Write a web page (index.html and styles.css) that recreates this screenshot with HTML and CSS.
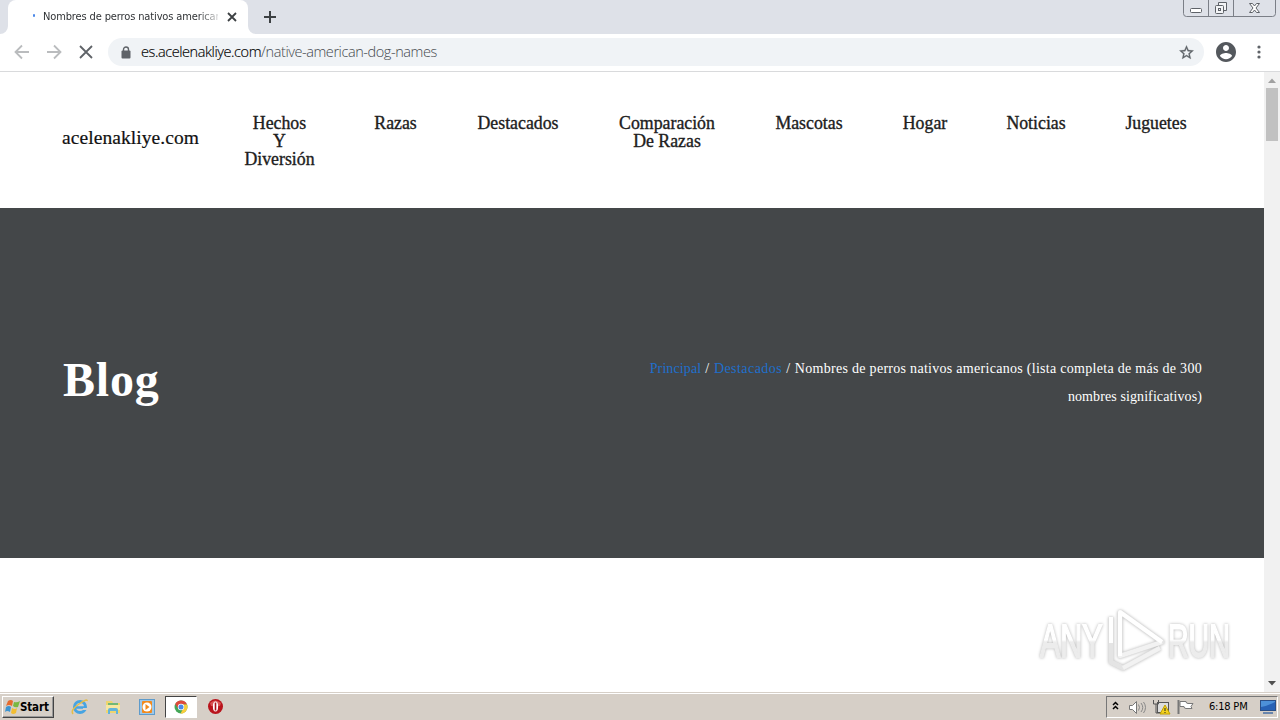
FILE: index.html
```html
<!DOCTYPE html>
<html lang="es">
<head>
<meta charset="utf-8">
<title>Nombres de perros nativos americanos</title>
<link rel="stylesheet" href="styles.css">
</head>
<body>
<div class="screen">
  <div class="tabstrip">
    <div class="tab">
      <span class="loading"></span>
      <span class="tab-title">Nombres de perros nativos american</span>
      <svg class="tab-close" width="10" height="10" viewBox="0 0 10 10"><path d="M1 1l8 8M9 1L1 9" stroke="#3c4043" stroke-width="1.8"/></svg>
      <svg class="tab-curve left" width="8" height="8"><path d="M8 0v8H0A8 8 0 0 0 8 0z" fill="#fff"/></svg>
      <svg class="tab-curve right" width="8" height="8"><path d="M0 0v8h8A8 8 0 0 1 0 0z" fill="#fff"/></svg>
    </div>
    <svg class="newtab" width="12" height="12"><path d="M6 0v12M0 6h12" stroke="#3c4043" stroke-width="2"/></svg>
    <svg class="winbuttons" width="94" height="18" fill="none" stroke="#7b7f87">
      <path d="M.5 0v13.5q0 3 3 3h86q3 0 3-3V0M25.500 0v16M50.500 0v16" />
      <g stroke="#5e6268"><rect x="7.500" y="8.500" width="11" height="4" rx="1" fill="#fff"/>
      <path d="M35.500 5V2.500h8v8H41" fill="#f3f4f6"/><rect x="32.500" y="5.500" width="8" height="8" rx="1" fill="#f3f4f6"/><rect x="35.500" y="8.500" width="2" height="2"/>
      <path d="M66.500 3.500h3l2 2.500 2-2.500h3l-3.500 4.500 3.500 4.500h-3l-2-2.500-2 2.500h-3l3.500-4.500z" fill="#fff"/></g>
    </svg>
  </div>
  <div class="toolbar">
    <svg class="nav-icons" width="108" height="37" fill="none" stroke-width="1.800">
      <path d="M29 18H16M22 11.500L15.500 18l6.500 6.500M47 18h13M54 11.500l6.500 6.500-6.500 6.500" stroke="#babcbe"/>
      <path d="M80 12l12 12M92 12L80 24" stroke="#5f6368"/>
    </svg>
    <div class="omnibox">
      <svg class="lock" width="10" height="13"><path d="M2.500 5V3.500a2.500 2.500 0 0 1 5 0V5" fill="none" stroke="#5f6368" stroke-width="1.400"/><rect x=".5" y="4.500" width="9" height="8" rx="1" fill="#5f6368"/></svg>
      <span class="url"><b>es.acelenakliye.com</b>/native-american-dog-names</span>
      <svg class="star" width="17" height="17" viewBox="0 0 24 24"><path d="M22 9.240l-7.190-.62L12 2 9.190 8.630 2 9.240l5.460 4.730L5.820 21 12 17.270 18.180 21l-1.630-7.030L22 9.240zM12 15.400l-3.760 2.270 1-4.280-3.320-2.880 4.380-.38L12 6.100l1.710 4.040 4.380.38-3.320 2.880 1 4.280L12 15.400z" fill="#5f6368" stroke="#5f6368" stroke-width=".4"/></svg>
    </div>
    <svg class="profile" width="22" height="22" viewBox="1 1 22 22"><path d="M12 2C6.480 2 2 6.480 2 12s4.480 10 10 10 10-4.480 10-10S17.520 2 12 2zm0 3c1.660 0 3 1.340 3 3s-1.340 3-3 3-3-1.340-3-3 1.340-3 3-3zm0 14.200c-2.500 0-4.710-1.280-6-3.220.03-1.990 4-3.080 6-3.080 1.990 0 5.970 1.090 6 3.080-1.290 1.940-3.500 3.220-6 3.220z" fill="#54585d"/></svg>
    <svg class="dots" width="4" height="14" fill="#5f6368"><circle cx="2" cy="2" r="1.600"/><circle cx="2" cy="7" r="1.600"/><circle cx="2" cy="12" r="1.600"/></svg>
  </div>
  <div class="viewport">
    <div class="page">
      <header class="header">
        <div class="brand">acelenakliye.com</div>
        <nav class="menu">
          <a>Hechos<br>Y<br>Diversión</a><a>Razas</a><a>Destacados</a><a>Comparación<br>De Razas</a><a>Mascotas</a><a>Hogar</a><a>Noticias</a><a>Juguetes</a>
        </nav>
      </header>
      <section class="hero">
        <h1>Blog</h1>
        <p class="crumbs"><a>Principal</a> / <a class="cat">Destacados</a> / <span class="l1">Nombres de perros nativos americanos (lista completa de más de 300</span><br><span class="l2">nombres significativos)</span></p>
      </section>
    </div>
    <div class="scrollbar">
      <svg width="16" height="16"><path d="M4 11l4-4.500 4 4.500z" fill="#a0a0a0"/></svg>
      <div class="thumb"></div>
      <svg class="down" width="16" height="17"><path d="M4 6h8l-4 4.500z" fill="#505050"/></svg>
    </div>
    <div class="watermark">
      <span class="wm any">ANY</span>
      <svg width="62" height="68" viewBox="0 0 62 68" fill="none" stroke-linejoin="round">
        <path d="M15 5v44L57 35 15 5M6 10v45l12 6 37-20" stroke="#e4e4e4" stroke-width="5"/>
        <path d="M15 5v44L57 35M18 61l37-20" stroke="#f2f2f2" stroke-width="4"/>
        <path d="M15 49V5l42 30M6 36V10" stroke="#fff" stroke-width="4"/>
      </svg>
      <span class="wm run">RUN</span>
    </div>
  </div>
  <div class="taskbar">
    <div class="start">
      <svg width="16" height="16"><path d="M3 2q3-2 5 0L7 7Q4 5 1 7z" fill="#e66b2e"/><path d="M9 3q3 1 6-1l-2 6q-3 1-5-1z" fill="#79b843"/><path d="M1 8q3-2 5 0l-1 5q-3-2-5 0z" fill="#3c94d1"/><path d="M7 9q3 2 5 0l-1 5q-3 2-5 0z" fill="#f2bd32"/></svg>
      <span>Start</span>
    </div>
    <div class="quick">
      <svg width="18" height="18" fill="none"><circle cx="9" cy="9" r="5.500" stroke="#47a4e2" stroke-width="3"/><path d="M5 9.500h9" stroke="#47a4e2" stroke-width="2.500"/><path d="M12 11h5" stroke="#d6cfc7" stroke-width="2"/><path d="M2 16Q-1 12 8 6t8-3" stroke="#e5bd48" stroke-width="1.500"/></svg>
      <svg width="18" height="18"><path d="M2 3h6l1 2h7v10H2z" fill="#eed56e"/><path d="M4 5h10v4H4z" fill="#71b876"/><path d="M2 7h14v5H2z" fill="#f7e7a0"/><path d="M4 16v-4q0-2 2-2h6q2 0 2 2v4h-2v-3H6v3z" fill="#62b4da"/></svg>
      <svg width="18" height="18"><rect x="1.500" y="1.500" width="15" height="15" fill="#9dc8ea" stroke="#5e9bcb"/><rect x="4" y="3" width="10" height="12" rx="1" fill="#f28a1d"/><circle cx="9" cy="9" r="4.500" fill="#fff"/><path d="M7.500 6v6l4-3z" fill="#f28a1d"/></svg>
      <div class="active"><svg width="14" height="14"><circle cx="7" cy="7" r="6.500" fill="#43a657"/><path d="M1.200 4A6.500 6.500 0 0 1 13 4.500H7L4.500 9z" fill="#df493b"/><path d="M13 4.500A6.500 6.500 0 0 1 6.500 13.500L9.500 8 7 4.500z" fill="#f9cd3c"/><circle cx="7" cy="7" r="3.200" fill="#fff"/><circle cx="7" cy="7" r="2.500" fill="#4b88e8"/></svg></div>
      <svg width="17" height="17"><circle cx="8.500" cy="8.500" r="7.500" fill="#b9141c"/><path d="M3 5q5-5 11 0l-1 3H4z" fill="#d95353"/><ellipse cx="8.500" cy="8.500" rx="2.600" ry="5" fill="#fff"/><path d="M8.500 4.500v8" stroke="#a81018" stroke-width="1.600"/></svg>
    </div>
    <div class="tray">
      <svg width="98" height="20" fill="none">
        <path d="M6 8l2.500-2.500L11 8M6 12l2.500-2.500L11 12" stroke="#000" stroke-width="1.500"/>
        <path d="M22.500 8.500h3l4-4v12l-4-4h-3z" fill="#fff" stroke="#777"/><path d="M31.500 7.500q2 3 0 6M34 6q3.500 4.500 0 9M36.500 5q4 5.500 0 11" stroke="#888"/>
        <rect x="50.500" y="5.500" width="11" height="10" fill="#ddd" stroke="#555"/><path d="M46.500 3v4h5V3M49 7v9h5" stroke="#555"/><path d="M58 8l5 9H53z" fill="#f4d21e" stroke="#c1a000"/><path d="M58 11v3M58 15v1" stroke="#222"/>
        <path d="M71.500 3v14" stroke="#777" stroke-width="2"/><path d="M73 4.500h6q0 2 2 2h5l-2 3 1 2h-6q-2 0-2-2h-4z" fill="#fff" stroke="#777"/>
      </svg>
      <span class="clock">6:18 PM</span>
      <svg class="desk" width="16" height="14"><rect x=".5" y=".5" width="15" height="10" fill="#2762b5" stroke="#2a4f87"/><path d="M1 7q7-1 14-5V1H1z" fill="#4d91d8"/><path d="M3 13h10" stroke="#6a86ad" stroke-width="2"/></svg>
    </div>
  </div>
</div>
</body>
</html>
```

FILE: styles.css
```css
* { box-sizing: border-box; }
body { margin: 0; background: #fff; }
svg { display: block; flex: none; }
.screen { width: 1280px; height: 720px; display: flex; flex-direction: column; overflow: hidden; }
.tabstrip { height: 34px; flex: none; background: #dee1e8; display: flex; padding-left: 8px; position: relative; }
.tab { width: 240px; height: 34px; background: #fff; border-radius: 8px 8px 0 0; position: relative; display: flex; align-items: center; padding-left: 25px; }
.loading { width: 2px; height: 3px; border-radius: 1px; background: #4b88e8; margin: 0 1px 4px 0; }
.tab-title { margin-left: 7px; width: 175px; height: 20px; font: 11px/20px "DejaVu Sans Condensed", "DejaVu Sans", sans-serif; font-stretch: condensed; letter-spacing: -.13px; color: #303336; white-space: nowrap; -webkit-mask-image: linear-gradient(to right, #000 155px, transparent 180px); }
.tab-close { margin-left: 9px; }
.tab-curve { position: absolute; bottom: 0; }
.left { left: -8px; }
.right { right: -8px; }
.newtab { margin: 11px 0 0 16px; }
.winbuttons { margin-left: auto; margin-right: 3px; }
.toolbar { height: 38px; flex: none; display: flex; align-items: center; border-bottom: 1px solid #d9dadc; }
.omnibox { width: 1096px; height: 28px; margin-bottom: 1px; border-radius: 14px; background: #f0f3f6; display: flex; align-items: center; padding: 0 9px 0 13px; }
.url { margin-left: 10px; font: 300 14.5px/20px "Open Sans", "Noto Sans", sans-serif; letter-spacing: -.43px; color: #45494e; }
.url b { font-weight: 300; color: #000; -webkit-text-stroke: .15px #000; letter-spacing: -.42px; }
.star { margin-left: auto; }
.profile { margin: 0 0 2px 11px; }
.dots { margin: 0 0 1px 20px; }
.viewport { height: 620px; flex: none; display: flex; position: relative; }
.page { width: 1264px; font-family: "Liberation Serif", serif; }
.header { height: 136px; display: flex; padding: 42px 0 0 62px; color: #202020; }
.brand { width: 183px; padding-top: 12px; font-size: 19.5px; line-height: 23px; color: #111; letter-spacing: .07px; -webkit-text-stroke: .2px #111; }
.menu { display: grid; grid-template-columns: 69px 43px 82px 96px 68px 44px 58px 62px; justify-items: center; column-gap: 60px; font-size: 17.8px; line-height: 18px; text-align: center; white-space: nowrap; -webkit-text-stroke: .35px #202020; }
.hero { height: 350px; background: #444749; color: #fff; display: flex; justify-content: space-between; padding: 0 62px 0 63px; }
.hero h1 { margin: 144px 0 0; font-size: 48px; line-height: 56px; letter-spacing: .8px; }
.crumbs { margin: 147px 0 0; text-align: right; font-size: 14px; line-height: 28px; white-space: nowrap; letter-spacing: .6px; }
.crumbs a { color: #1f6fcb; letter-spacing: .1px; }
.crumbs .cat { letter-spacing: .45px; }
.l1 { letter-spacing: .29px; }
.l2 { letter-spacing: .1px; }
.scrollbar { width: 16px; background: #f1f1f1; display: flex; flex-direction: column; align-items: center; }
.thumb { width: 12px; height: 53px; background: #c1c1c1; }
.down { margin-top: auto; }
.watermark { position: absolute; left: 1040px; top: 535px; width: 196px; height: 68px; display: flex; align-items: center; filter: drop-shadow(0 0 1.5px #b5b5b5); }
.wm { font: 46px/56px "Liberation Sans", sans-serif; color: transparent; background: linear-gradient(#fff 48%, #ececec 52%); -webkit-background-clip: text; background-clip: text; transform-origin: left; width: 106px; margin-right: -41px; flex: none; -webkit-text-stroke: 2px transparent; }
.any { transform: scaleX(.66); }
.run { transform: scaleX(.62); margin-left: 1px; }
.taskbar { height: 28px; flex: none; background: #d6cfc7; border-top: 1px solid #d6cfc7; box-shadow: inset 0 1px #fff; display: flex; align-items: center; padding-left: 2px; }
.start { width: 52px; height: 22px; display: flex; align-items: center; padding-left: 2px; border: 1px solid; border-color: #fff #444 #444 #fff; box-shadow: inset -1px -1px #999; font: bold 11.5px/16px "DejaVu Sans Condensed", "DejaVu Sans", sans-serif; font-stretch: condensed; letter-spacing: -.15px; }
.start span { margin-left: -1px; }
.quick { display: flex; align-items: center; margin-left: 16.5px; gap: 15.5px; }
.quick .active { width: 32px; height: 22px; background: #fff; border: 1px solid; border-color: #444 #fff #fff #444; display: flex; justify-content: center; align-items: center; margin: 0 -6px; }
.tray { margin-left: auto; margin-right: 2px; width: 172px; height: 22px; border: 1px solid; border-color: #777 #fff #fff #777; display: flex; align-items: center; }
.clock { width: 47px; margin-left: 4px; font: 11px/16px "DejaVu Sans Condensed", "DejaVu Sans", sans-serif; font-stretch: condensed; letter-spacing: -.2px; white-space: nowrap; }
.desk { margin-left: 4px; }
```
